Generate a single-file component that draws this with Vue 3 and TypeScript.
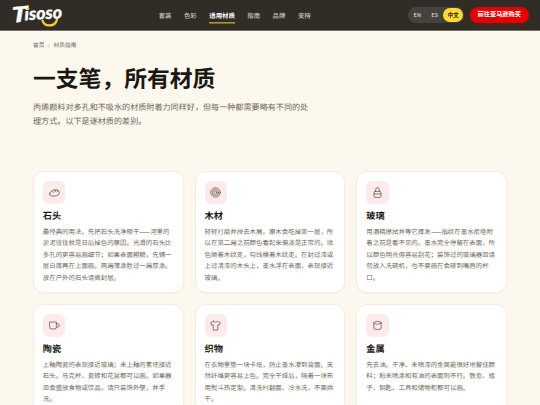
<script setup lang="ts">
interface NavItem {
  label: string;
  active?: boolean;
}

interface Material {
  icon: string;
  title: string;
  text: string;
}

const navItems: NavItem[] = [
  { label: '套装' },
  { label: '色彩' },
  { label: '适用材质', active: true },
  { label: '指南' },
  { label: '品牌' },
  { label: '支持' },
];

const languages: string[] = ['EN', 'ES', '中文'];
const currentLanguage = '中文';

const materials: Material[] = [
  {
    icon: 'stone',
    title: '石头',
    text: '最经典的用法。先把石头洗净晾干——河里的淤泥往往就是日后掉色的原因。光滑的石头比多孔的更容易画细节；如果表面粗糙，先铺一层白底再在上面画。两遍薄涂胜过一遍厚涂。放在户外的石头请做封层。',
  },
  {
    icon: 'wood',
    title: '木材',
    text: '轻轻打磨并掸去木屑。原木会吃掉第一层，所以在第二遍之前颜色看起来偏淡是正常的。填色顺着木纹走，勾线横着木纹走。在封过漆或上过清漆的木头上，墨水浮在表面，表现接近玻璃。',
  },
  {
    icon: 'glass',
    title: '玻璃',
    text: '用酒精擦拭并等它挥发——指纹在墨水拒绝附着之前是看不见的。墨水完全停留在表面，所以颜色明亮但容易刮花；装饰过的玻璃器皿请勿放入洗碗机，也不要画在会碰到嘴唇的杯口。',
  },
  {
    icon: 'ceramic',
    title: '陶瓷',
    text: '上釉陶瓷的表现接近玻璃；未上釉的素坯接近石头。马克杯、瓷砖和花盆都可以画。如果器皿会盛放食物或饮品，请只装饰外壁，并手洗。',
  },
  {
    icon: 'fabric',
    title: '织物',
    text: '在衣物里垫一块卡纸，防止墨水渗到背面。天然纤维更容易上色。完全干燥后，隔着一块布用熨斗热定型。清洗时翻面、冷水洗，不要烘干。',
  },
  {
    icon: 'metal',
    title: '金属',
    text: '先去油。干净、未喷漆的金属能很好地留住颜料；粉末喷涂和有油的表面则不行。铁盒、瓶子、钥匙、工具和储物柜都可以画。',
  },
];
</script>

<template>
  <div class="page">
    <header class="header">
      <svg class="logo" viewBox="0 0 54 26" aria-label="Tisoso">
        <path class="logo-smile" d="M30.500 18.600c2 6.600 12.500 6.600 14.500-1" />
        <g class="logo-text">
          <text transform="translate(-.5 20.800) rotate(-6) skewX(-6)" font-size="21" textLength="16" lengthAdjust="spacingAndGlyphs">T</text>
          <text transform="translate(12.800 18.200) rotate(-3)" font-size="17.500" textLength="37.500" lengthAdjust="spacingAndGlyphs">isoso</text>
        </g>
        <circle class="logo-dot" cx="16" cy="6.800" r="1.300" />
      </svg>
      <nav class="nav">
        <a
          v-for="item in navItems"
          :key="item.label"
          class="nav-link"
          :class="{ active: item.active }"
        >{{ item.label }}</a>
      </nav>
      <div class="languages">
        <button
          v-for="language in languages"
          :key="language"
          class="language"
          :class="{ active: language === currentLanguage }"
        >{{ language }}</button>
      </div>
      <button class="buy">前往亚马逊购买</button>
    </header>

    <main class="content">
      <div class="breadcrumb">
        <span>首页</span>
        <span class="separator">/</span>
        <span>材质指南</span>
      </div>
      <h1>一支笔，所有材质</h1>
      <p class="lead">丙烯颜料对多孔和不吸水的材质附着力同样好，但每一种都需要略有不同的处理方式。以下是逐材质的差别。</p>

      <section class="grid">
        <article v-for="material in materials" :key="material.title" class="card">
          <div class="icon">
            <svg viewBox="0 0 24 24">
              <template v-if="material.icon === 'stone'">
                <path d="M1.500 15.500c0-5 6-9.500 13-9.500 5 0 8 2.500 8 6 0 4.500-3.500 7.500-8.500 7.500H6c-3 0-4.500-1.500-4.500-4z" />
                <path d="M8 8.500l1.500 3.500M13 6.500l1.500 4M18 6.500l.8 3.500" />
              </template>
              <template v-else-if="material.icon === 'wood'">
                <circle cx="12" cy="12" r="10.300" />
                <circle cx="12" cy="12" r="6.800" />
                <circle cx="12" cy="12" r="3.300" />
              </template>
              <template v-else-if="material.icon === 'glass'">
                <path d="M8 9.500V5.500a4 4 0 0 1 8 0v4" />
                <path d="M7 9.500h10a2.500 2.500 0 0 1 2.500 2.500v9a1.500 1.500 0 0 1-1.500 1.500H6A1.500 1.500 0 0 1 4.500 21v-9A2.500 2.500 0 0 1 7 9.500zM4.500 15h15" />
              </template>
              <template v-else-if="material.icon === 'ceramic'">
                <path d="M1.500 4.500h14.500v12a3 3 0 0 1-3 3H4.500a3 3 0 0 1-3-3zM16 8h3a3 3 0 0 1 3 3v1.500a3 3 0 0 1-3 3h-3" />
              </template>
              <template v-else-if="material.icon === 'fabric'">
                <path d="M8 2.500L1.500 6l2.500 5.500 3-1V22h10V10.500l3 1L22.500 6 16 2.500c-1 3.500-7 3.500-8 0z" />
              </template>
              <template v-else>
                <ellipse cx="12" cy="6" rx="8" ry="3" />
                <path d="M4 6v12c0 3.500 16 3.500 16 0V6" />
              </template>
            </svg>
          </div>
          <h2>{{ material.title }}</h2>
          <p>{{ material.text }}</p>
        </article>
      </section>
    </main>
  </div>
</template>

<style>
body {
  background: #fcf8ee;
  overflow: hidden;
}
</style>

<style scoped>
.page {
  height: 405px;
  overflow: hidden;
  background: #fcf8ee;
  color: #1b1814;
  font-family: "Noto Sans CJK SC", sans-serif;
  text-rendering: geometricPrecision;
}

.header {
  display: flex;
  align-items: center;
  height: 31px;
  box-sizing: border-box;
  padding: 0 11.5px;
  background: #302c26;
  border-bottom: 1px solid #75716a;
}

.logo {
  width: 54px;
  height: 26px;
  flex: none;
  overflow: visible;
}

.logo-text {
  fill: #fff;
  stroke: #fff;
  stroke-width: 0.3;
  font-family: Lato, sans-serif;
  font-weight: 900;
  font-style: italic;
}

.logo-smile {
  fill: none;
  stroke: #f6cf32;
  stroke-width: 2.2;
  stroke-linecap: round;
}

.logo-dot {
  fill: #f6cf32;
}

.nav {
  display: flex;
  gap: 12.5px;
  margin-left: 93.2px;
}

.nav-link {
  height: 16px;
  box-sizing: border-box;
  padding-top: 2.8px;
  font-size: 6.4px;
  line-height: 11px;
  font-weight: 500;
  color: #c9c5bf;
  border-bottom: 1px solid transparent;
}

.nav-link.active {
  color: #fff;
  font-weight: 700;
  border-color: #b3972a;
  box-shadow: 0 1px #7d6b24;
}

button {
  border: 0;
  padding: 0;
  font-family: inherit;
}

.languages {
  display: flex;
  align-items: center;
  margin-left: auto;
  height: 16.5px;
  box-sizing: border-box;
  padding: 0.7px;
  border-radius: 9px;
  background: #46423d;
}

.language {
  width: 17.3px;
  height: 14.8px;
  border-radius: 8px;
  background: transparent;
  color: #c3beb8;
  font-size: 5.4px;
  line-height: 14.8px;
  font-weight: 700;
  letter-spacing: 0.2px;
}

.language.active {
  width: 19.8px;
  background: #ffda32;
  color: #1b1814;
  letter-spacing: 0;
}

.buy {
  width: 58.5px;
  height: 16px;
  margin-left: 6.2px;
  border-radius: 8px;
  background: #e30202;
  color: #fff;
  font-size: 6.2px;
  line-height: 14px;
  padding-bottom: 2px;
  font-weight: 700;
  box-shadow: 0 2px 5px rgba(227, 2, 2, 0.25);
}

.content {
  padding: 0 33px;
}

.breadcrumb {
  display: flex;
  gap: 3.5px;
  padding-top: 9px;
  font-size: 5.7px;
  line-height: 10px;
  color: #6d665e;
}

.separator {
  color: #aaa49b;
}

h1 {
  margin: 11px 0 0;
  font-size: 22.8px;
  line-height: 34px;
  font-weight: 700;
}

.lead {
  width: 278px;
  margin: 6px 0 0;
  font-size: 8.1px;
  line-height: 14.3px;
  color: #6f655a;
}

.grid {
  display: grid;
  grid-template-columns: repeat(3, 1fr);
  gap: 11.2px;
  margin-top: 41.9px;
}

.card {
  box-sizing: border-box;
  padding: 8.8px;
  background: #fff;
  border: 1px solid #f2eee6;
  border-radius: 11px;
  box-shadow: 0 1px 2px rgba(60, 45, 20, 0.03);
}

.icon {
  display: flex;
  align-items: center;
  justify-content: center;
  width: 22.5px;
  height: 22.5px;
  border-radius: 6px;
  background: #fdeaea;
}

.icon svg {
  width: 11px;
  height: 11px;
  fill: none;
  stroke: #6a5753;
  stroke-width: 1.7;
  stroke-linecap: round;
  stroke-linejoin: round;
}

h2 {
  margin: 5px 0 0;
  font-size: 9.2px;
  line-height: 13px;
  font-weight: 700;
}

.card p {
  margin: 4px 0 0;
  font-size: 6.45px;
  line-height: 11.5px;
  color: #6f655a;
}
</style>
